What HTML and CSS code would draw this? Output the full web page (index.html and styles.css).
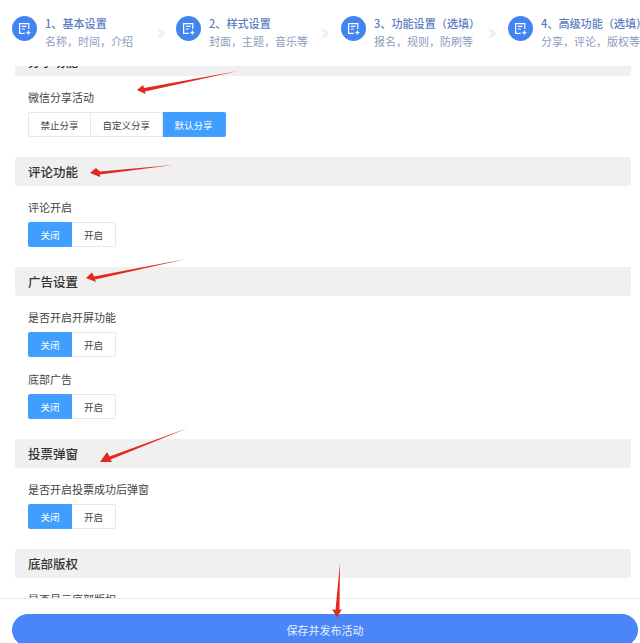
FILE: index.html
```html
<!DOCTYPE html>
<html lang="zh-CN">
<head>
<meta charset="utf-8">
<title>活动设置</title>
<link rel="stylesheet" href="styles.css">
</head>
<body>
<div class="page">
  <header class="steps">
    <div class="step">
      <span class="step-icon"><svg viewBox="0 0 25 25"><path d="M16.8 13V7.6H7.6v9.8h5.2M9.8 10.4h4.8M9.8 13h3.2M14.4 16.6h4M16.4 14.6v4"/></svg></span>
      <div class="step-text"><div class="step-title">1、基本设置</div><div class="step-sub">名称，时间，介绍</div></div>
      <svg class="chevron" viewBox="0 0 9 11"><path d="M1 .8 5.2 5.5 1 10.2M4 .8 8.2 5.5 4 10.2"/></svg>
    </div>
    <div class="step">
      <span class="step-icon"><svg viewBox="0 0 25 25"><path d="M16.8 13V7.6H7.6v9.8h5.2M9.8 10.4h4.8M9.8 13h3.2M14.4 16.6h4M16.4 14.6v4"/></svg></span>
      <div class="step-text"><div class="step-title">2、样式设置</div><div class="step-sub">封面，主题，音乐等</div></div>
      <svg class="chevron" viewBox="0 0 9 11"><path d="M1 .8 5.2 5.5 1 10.2M4 .8 8.2 5.5 4 10.2"/></svg>
    </div>
    <div class="step">
      <span class="step-icon"><svg viewBox="0 0 25 25"><path d="M16.8 13V7.6H7.6v9.8h5.2M9.8 10.4h4.8M9.8 13h3.2M14.4 16.6h4M16.4 14.6v4"/></svg></span>
      <div class="step-text"><div class="step-title">3、功能设置（选填）</div><div class="step-sub">报名，规则，防刷等</div></div>
      <svg class="chevron" viewBox="0 0 9 11"><path d="M1 .8 5.2 5.5 1 10.2M4 .8 8.2 5.5 4 10.2"/></svg>
    </div>
    <div class="step step-last">
      <span class="step-icon"><svg viewBox="0 0 25 25"><path d="M16.8 13V7.6H7.6v9.8h5.2M9.8 10.4h4.8M9.8 13h3.2M14.4 16.6h4M16.4 14.6v4"/></svg></span>
      <div class="step-text"><div class="step-title">4、高级功能（选填）</div><div class="step-sub">分享，评论，版权等</div></div>
    </div>
  </header>

  <main class="scroller">
    <div class="scroll-content">
      <section class="group">
        <h2 class="group-title">分享功能</h2>
        <div class="field">
          <div class="field-label">微信分享活动</div>
          <div class="radio-group"><span class="radio">禁止分享</span><span class="radio">自定义分享</span><span class="radio is-on">默认分享</span></div>
        </div>
      </section>
      <section class="group">
        <h2 class="group-title">评论功能</h2>
        <div class="field">
          <div class="field-label">评论开启</div>
          <div class="radio-group"><span class="radio is-on">关闭</span><span class="radio">开启</span></div>
        </div>
      </section>
      <section class="group">
        <h2 class="group-title">广告设置</h2>
        <div class="field">
          <div class="field-label">是否开启开屏功能</div>
          <div class="radio-group"><span class="radio is-on">关闭</span><span class="radio">开启</span></div>
        </div>
        <div class="field">
          <div class="field-label">底部广告</div>
          <div class="radio-group"><span class="radio is-on">关闭</span><span class="radio">开启</span></div>
        </div>
      </section>
      <section class="group">
        <h2 class="group-title">投票弹窗</h2>
        <div class="field">
          <div class="field-label">是否开启投票成功后弹窗</div>
          <div class="radio-group"><span class="radio is-on">关闭</span><span class="radio">开启</span></div>
        </div>
      </section>
      <section class="group">
        <h2 class="group-title">底部版权</h2>
        <div class="field">
          <div class="field-label">是否显示底部版权</div>
          <div class="radio-group"><span class="radio is-on">关闭</span><span class="radio">开启</span></div>
        </div>
      </section>
    </div>
  </main>

  <footer class="actions">
    <button class="save" type="button">保存并发布活动</button>
  </footer>

  <svg class="arrows" viewBox="0 0 640 643">
    <polygon points="238,71 145,91.5 145.5,94 137,90 143,85 144,88"/>
    <polygon points="173,165 100,174.5 100,177 90,173 96,168 100,171.5"/>
    <polygon points="186,259 95,279.5 96,282 86,278 92,272.5 94,276.5"/>
    <polygon points="188,428 110.5,459.5 112,462 100,462 107,452 109.5,456.5"/>
    <polygon points="340,563 339.5,610 342,609 337,617.5 332,609 335.5,610"/>
  </svg>
</div>
</body>
</html>
```
FILE: styles.css
```css
* { box-sizing: border-box; }
html, body { margin: 0; height: 643px; overflow: hidden; background: #fff; }
body { font-family: "Noto Sans CJK SC", "Noto Sans", sans-serif; color: #333; }

.page { position: relative; display: flex; flex-direction: column; width: 640px; height: 643px; overflow: hidden; }

.steps {
  flex: 0 0 66px;
  display: grid;
  grid-template-columns: 164px 165px 167px 144px;
  padding-left: 12px;
  padding-top: 16px;
  overflow: hidden;
  background: #fff;
}
.step { display: flex; align-items: flex-start; padding-right: 12px; min-width: 0; }
.step:first-child { padding-right: 11px; }
.step-last { padding-right: 0; white-space: nowrap; }
.step-icon { flex: 0 0 25px; width: 25px; height: 25px; border-radius: 50%; background: #4285f0; }
.step-icon svg { display: block; width: 25px; height: 25px; fill: none; stroke: #fff; stroke-width: 1.2; }
.step-text { margin-left: 8px; white-space: nowrap; }
.step-title { font-size: 11.1px; line-height: 15px; font-weight: 500; color: #5b7cc0; }
.step-sub { font-size: 11px; line-height: 15px; margin-top: 3px; color: #8c9cbd; }
.chevron { flex: none; width: 8px; height: 11px; margin-left: auto; margin-top: 12px; fill: none; stroke: #d4d6da; stroke-width: 1; }

.scroller { flex: 1 1 0; min-height: 0; overflow: hidden; padding: 0 9px 0 15px; }
.scroll-content { margin-top: -19px; }

.group { margin-bottom: 20px; }
.group-title {
  margin: 0;
  height: 29px;
  padding-left: 13px;
  font-size: 12.5px;
  line-height: 29px;
  font-weight: 500;
  color: #333;
  background: #f0f0f0;
  border-radius: 2px;
}
.field { padding: 14px 13px 0; }
.field + .field { padding-top: 15px; }
.field-label { font-size: 11px; line-height: 14px; margin-bottom: 8px; color: #444; }

.radio-group { display: inline-flex; height: 25px; vertical-align: top; }
.radio {
  display: flex;
  align-items: center;
  padding: 0 11.5px;
  font-size: 9.5px;
  color: #444;
  border: 1px solid #e6e8ec;
  border-left-width: 0;
  background: #fff;
}
.radio:first-child { border-left-width: 1px; border-radius: 2px 0 0 2px; }
.radio:last-child { padding: 0 12px; border-radius: 0 2px 2px 0; }
.radio.is-on { color: #fff; background: #409eff; border-color: #409eff; }

.actions { flex: 0 0 45px; padding: 15px 2px 0 12px; border-top: 1px solid #ececec; overflow: hidden; background: #fff; }
.save {
  display: block;
  width: 100%;
  height: 32px;
  padding: 0;
  border: 0;
  border-radius: 16px;
  background: #4a86f7;
  color: #e8f0ff;
  font: 11px/32px "Noto Sans CJK SC", sans-serif;
}

.arrows { position: absolute; left: 0; top: 0; width: 640px; height: 643px; pointer-events: none; fill: #e2291f; }
```
